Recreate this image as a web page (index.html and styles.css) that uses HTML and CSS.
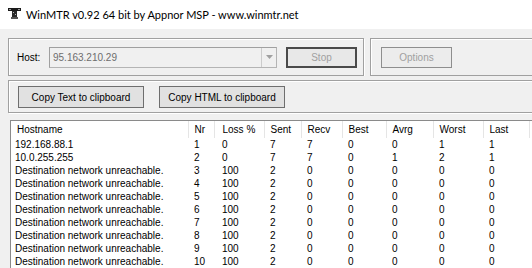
FILE: index.html
```html
<!DOCTYPE html>
<html>
<head>
<meta charset="utf-8">
<title>WinMTR</title>
<link rel="stylesheet" href="styles.css">
</head>
<body>
<div class="titlebar">
  <svg class="appicon" width="13" height="12" viewBox="0 0 13 12">
    <rect x="0" y="0" width="13" height="3" fill="#1a1a1a"/>
    <rect x="1" y="1" width="2" height="1" fill="#9a9a9a"/>
    <rect x="10" y="1" width="2" height="1" fill="#9a9a9a"/>
    <rect x="4" y="3" width="5" height="6" fill="#2a2a2a"/>
    <rect x="5" y="4" width="1" height="1" fill="#bbbbbb"/>
    <rect x="7" y="6" width="1" height="1" fill="#bbbbbb"/>
    <rect x="3" y="9" width="7" height="2" fill="#555555"/>
  </svg>
  <span class="title">WinMTR v0.92 64 bit by Appnor MSP - www.winmtr.net</span>
</div>
<div class="client">
  <div class="toprow">
    <div class="group hostgroup">
      <span class="hostlabel">Host:</span>
      <div class="combo">
        <span class="combo-text">95.163.210.29</span>
        <span class="combo-btn">
          <svg width="7" height="4" viewBox="0 0 7 4"><path d="M0 0H7L3.5 4Z" fill="#a0a0a0"/></svg>
        </span>
      </div>
      <button class="btn btn-stop">Stop</button>
    </div>
    <div class="group optgroup">
      <button class="btn btn-options">Options</button>
    </div>
  </div>
  <div class="group copygroup">
    <button class="btn btn-copy">Copy Text to clipboard</button>
    <button class="btn btn-copy">Copy HTML to clipboard</button>
  </div>
  <div class="list">
    <table class="grid">
      <colgroup>
        <col class="c-host"><col class="c-nr"><col class="c-loss"><col class="c-sent"><col class="c-recv"><col class="c-best"><col class="c-avrg"><col class="c-worst"><col class="c-last"><col class="c-rest">
      </colgroup>
      <thead>
        <tr><th>Hostname</th><th>Nr</th><th class="loss">Loss %</th><th>Sent</th><th>Recv</th><th>Best</th><th>Avrg</th><th>Worst</th><th>Last</th><th class="rest"></th></tr>
      </thead>
      <tbody>
        <tr><td class="host">192.168.88.1</td><td>1</td><td class="loss">0</td><td>7</td><td>7</td><td>0</td><td>0</td><td>1</td><td>1</td><td></td></tr>
        <tr><td class="host">10.0.255.255</td><td>2</td><td class="loss">0</td><td>7</td><td>7</td><td>0</td><td>1</td><td>2</td><td>1</td><td></td></tr>
        <tr><td class="host">Destination network unreachable.</td><td>3</td><td class="loss">100</td><td>2</td><td>0</td><td>0</td><td>0</td><td>0</td><td>0</td><td></td></tr>
        <tr><td class="host">Destination network unreachable.</td><td>4</td><td class="loss">100</td><td>2</td><td>0</td><td>0</td><td>0</td><td>0</td><td>0</td><td></td></tr>
        <tr><td class="host">Destination network unreachable.</td><td>5</td><td class="loss">100</td><td>2</td><td>0</td><td>0</td><td>0</td><td>0</td><td>0</td><td></td></tr>
        <tr><td class="host">Destination network unreachable.</td><td>6</td><td class="loss">100</td><td>2</td><td>0</td><td>0</td><td>0</td><td>0</td><td>0</td><td></td></tr>
        <tr><td class="host">Destination network unreachable.</td><td>7</td><td class="loss">100</td><td>2</td><td>0</td><td>0</td><td>0</td><td>0</td><td>0</td><td></td></tr>
        <tr><td class="host">Destination network unreachable.</td><td>8</td><td class="loss">100</td><td>2</td><td>0</td><td>0</td><td>0</td><td>0</td><td>0</td><td></td></tr>
        <tr><td class="host">Destination network unreachable.</td><td>9</td><td class="loss">100</td><td>2</td><td>0</td><td>0</td><td>0</td><td>0</td><td>0</td><td></td></tr>
        <tr><td class="host">Destination network unreachable.</td><td>10</td><td class="loss">100</td><td>2</td><td>0</td><td>0</td><td>0</td><td>0</td><td>0</td><td></td></tr>
      </tbody>
    </table>
  </div>
</div>
</body>
</html>
```

FILE: styles.css
```css
html, body {
  margin: 0;
  padding: 0;
}
body {
  width: 532px;
  height: 268px;
  overflow: hidden;
  background: #f0f0f0;
  font-family: "Liberation Sans", Arial, sans-serif;
  font-size: 10px;
  color: #000;
}
.titlebar {
  height: 29px;
  background: #fff;
  display: flex;
  align-items: center;
  padding-left: 8px;
  box-sizing: border-box;
}
.appicon {
  display: block;
  margin-right: 5px;
  margin-top: -1px;
}
.title {
  font-family: Lato, "Noto Sans", sans-serif;
  font-size: 11px;
  color: #000;
  margin-top: -1px;
}
.client {
  padding: 9px 0 0 8px;
  overflow: hidden;
  height: 239px;
  box-sizing: border-box;
}
.toprow {
  display: flex;
  gap: 6px;
  width: 524px;
  overflow: hidden;
}
.group {
  border: 1px solid #a0a0a0;
  box-shadow: inset 1px 1px 0 #fff, 1px 1px 0 #fff;
  box-sizing: border-box;
  display: flex;
  align-items: center;
  flex: none;
}
.hostgroup {
  width: 356px;
  height: 38px;
  padding-left: 8px;
}
.hostlabel {
  width: 32px;
  flex: none;
}
.combo {
  width: 228px;
  height: 21px;
  box-sizing: border-box;
  border: 1px solid #b4b4b4;
  border-top-color: #a0a0a0;
  border-left-color: #a0a0a0;
  background: #f0f0f0;
  display: flex;
  align-items: center;
  flex: none;
}
.combo-text {
  flex: 1;
  color: #6d6d6d;
  padding-left: 3px;
}
.combo-btn {
  width: 15px;
  height: 19px;
  box-sizing: border-box;
  border-left: 1px solid #cccccc;
  display: flex;
  align-items: center;
  justify-content: center;
}
.btn {
  font-family: "Liberation Sans", Arial, sans-serif;
  font-size: 10px;
  padding: 0;
  margin: 0;
  box-sizing: border-box;
  background: #e1e1e1;
  border: 1px solid #adadad;
  color: #000;
  flex: none;
}
.btn-stop {
  width: 71px;
  height: 21px;
  margin-left: 9px;
  border: 2px solid #4a4a4a;
  background: #e8e8e8;
  color: #a0a0a0;
}
.optgroup {
  width: 170px;
  height: 38px;
  padding-left: 10px;
}
.btn-options {
  width: 71px;
  height: 21px;
  border: 1px solid #8e8e8e;
  background: #ececec;
  color: #a0a0a0;
}
.copygroup {
  margin-top: 4px;
  width: 528px;
  height: 33px;
  padding-left: 9px;
  padding-top: 1px;
  gap: 15px;
}
.btn-copy {
  width: 126px;
  height: 22px;
  border: 1px solid #6e6e6e;
  background: #e1e1e1;
}
.list {
  margin-top: 7px;
  margin-left: 2px;
  width: 526px;
  height: 150px;
  overflow: hidden;
  background: #fff;
  border: 1px solid #8a8a8a;
  border-right: none;
  box-sizing: border-box;
}
.grid {
  border-collapse: collapse;
  table-layout: fixed;
  width: 560px;
}
.c-host { width: 177px; }
.c-nr { width: 26px; }
.c-loss { width: 50px; }
.c-sent { width: 37px; }
.c-recv { width: 41px; }
.c-best { width: 44px; }
.c-avrg { width: 47px; }
.c-worst { width: 50px; }
.c-last { width: 46px; }
.c-rest { width: 42px; }
.grid th {
  height: 17px;
  padding: 0 0 0 6px;
  text-align: left;
  font-weight: normal;
  border-right: 1px solid #e5e5e5;
  white-space: nowrap;
  line-height: 17px;
}
.grid th.loss {
  padding-left: 8px;
}
.grid th.rest {
  border-right: none;
}
.grid td {
  height: 13px;
  line-height: 13px;
  padding: 0 0 0 6px;
  white-space: nowrap;
}
.grid td.host {
  padding-left: 4px;
}
.grid td.loss {
  padding-left: 8px;
}
```
